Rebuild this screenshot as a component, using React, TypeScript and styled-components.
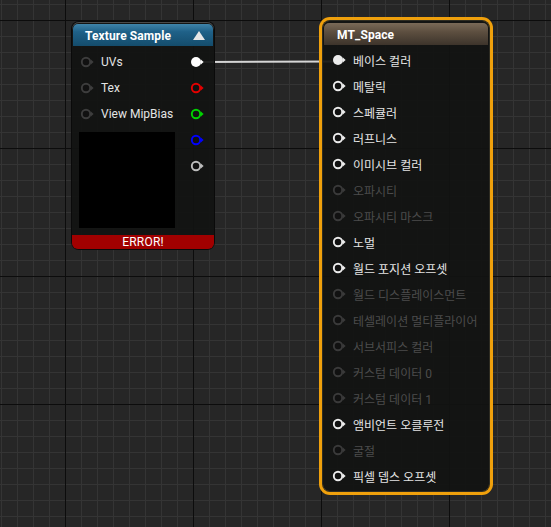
import React from 'react';
import styled, { createGlobalStyle } from 'styled-components';

const GlobalStyle = createGlobalStyle`
    html, body {
        margin: 0;
        padding: 0;
        background: #262626;
    }
    body {
        font-family: Roboto, "Noto Sans CJK KR", sans-serif;
    }
`;

const Canvas = styled.div`
    position: relative;
    width: 551px;
    height: 527px;
    overflow: hidden;
    background-color: #262626;
    background-image:
        linear-gradient(to right, #0c0c0c 1px, transparent 1px),
        linear-gradient(to bottom, #0c0c0c 1px, transparent 1px),
        linear-gradient(to right, #343434 1px, transparent 1px),
        linear-gradient(to bottom, #343434 1px, transparent 1px);
    background-size: 128px 100%, 100% 128px, 16px 100%, 100% 16px;
    background-position: 65px 0, 0 20px, 1px 0, 0 4px;
`;

const Wires = styled.svg`
    position: absolute;
    left: 0;
    top: 0;
    width: 551px;
    height: 527px;
    pointer-events: none;
`;

interface NodeBoxProps {
    $x: number;
    $y: number;
    $w: number;
    $selected?: boolean;
}

const NodeBox = styled.div<NodeBoxProps>`
    position: absolute;
    left: ${(p) => p.$x}px;
    top: ${(p) => p.$y}px;
    width: ${(p) => p.$w}px;
    box-sizing: border-box;
    display: flex;
    flex-direction: column;
    padding: 2px 1px 0;
    border-radius: 7px;
    background: rgba(18, 19, 18, 0.93);
    box-shadow: ${(p) => (p.$selected
        ? '0 0 0 1px #2e2c22, 0 0 0 4px #efa00c'
        : '0 0 0 1px #0a0a0a, inset 0 1px 0 #4a4a4a')};
`;

const Header = styled.div<{ $tone: 'blue' | 'brown' }>`
    height: 22px;
    box-sizing: border-box;
    display: flex;
    align-items: center;
    justify-content: space-between;
    padding: 1px 8px 0 ${(p) => (p.$tone === 'blue' ? 12 : 13)}px;
    border-radius: 5px 5px 0 0;
    background: ${(p) => (p.$tone === 'blue'
        ? 'linear-gradient(180deg, #3f84aa 0%, #1f6188 35%, #144c6c 100%)'
        : 'linear-gradient(180deg, #7a6a58 0%, #5d4f40 40%, #3d342b 100%)')};
    color: #fff;
    font-weight: bold;
    font-size: 12px;
    letter-spacing: 0.1px;
`;

const Collapse = styled.span`
    width: 0;
    height: 0;
    border-left: 6px solid transparent;
    border-right: 6px solid transparent;
    border-bottom: 9px solid #e6e6e6;
    margin-bottom: 1px;
`;

const Body = styled.div`
    display: flex;
    justify-content: space-between;
    padding-top: 3px;
`;

const Column = styled.div<{ $right?: boolean }>`
    display: flex;
    flex-direction: column;
    padding: ${(p) => (p.$right ? '0 9px 0 0' : '0')};
`;

const Row = styled.div<{ $pad?: number }>`
    height: 26px;
    display: flex;
    align-items: center;
    gap: 7px;
    padding-left: ${(p) => p.$pad ?? 7}px;
`;

const Label = styled.span<{ $dim?: boolean }>`
    font-size: 12px;
    color: ${(p) => (p.$dim ? '#4c4c4c' : '#e4e4e4')};
    white-space: nowrap;
`;

const Preview = styled.div`
    width: 96px;
    height: 96px;
    margin: 5px 0 0 6px;
    background: #000;
`;

const ErrorBar = styled.div`
    margin: 7px -1px 0;
    height: 14px;
    border-radius: 0 0 6px 6px;
    background: #a10000;
    color: #fff;
    font-size: 12px;
    line-height: 14px;
    text-align: center;
    letter-spacing: 0.2px;
`;

const PinSvg = styled.svg`
    flex: none;
    width: 14px;
    height: 12px;
`;

function Pin({ color, filled, fill = '#111' }: { color: string; filled?: boolean; fill?: string }): JSX.Element {
    return (
        <PinSvg viewBox='0 0 14 12'>
            <circle cx='6' cy='6' r={filled ? 5 : 4.2} fill={filled ? color : fill} stroke={color} strokeWidth={filled ? 0 : 1.9} />
            <polygon points='10.6,3.2 13.6,6 10.6,8.8' fill={color} />
        </PinSvg>
    );
}

const textureInputs = ['UVs', 'Tex', 'View MipBias'];
const textureOutputs = [
    { color: '#ffffff', filled: true },
    { color: '#e40000' },
    { color: '#00d400' },
    { color: '#0000ff' },
    { color: '#bdbdbd' },
];

const materialInputs: { label: string; active: boolean; linked?: boolean }[] = [
    { label: '베이스 컬러', active: true, linked: true },
    { label: '메탈릭', active: true },
    { label: '스페큘러', active: true },
    { label: '러프니스', active: true },
    { label: '이미시브 컬러', active: true },
    { label: '오파시티', active: false },
    { label: '오파시티 마스크', active: false },
    { label: '노멀', active: true },
    { label: '월드 포지션 오프셋', active: true },
    { label: '월드 디스플레이스먼트', active: false },
    { label: '테셀레이션 멀티플라이어', active: false },
    { label: '서브서피스 컬러', active: false },
    { label: '커스텀 데이터 0', active: false },
    { label: '커스텀 데이터 1', active: false },
    { label: '앰비언트 오클루전', active: true },
    { label: '굴절', active: false },
    { label: '픽셀 뎁스 오프셋', active: true },
];

function TextureSampleNode(): JSX.Element {
    return (
        <NodeBox $x={72} $y={22} $w={142}>
            <Header $tone='blue'>
                Texture Sample
                <Collapse />
            </Header>
            <Body>
                <Column>
                    {textureInputs.map((name) => (
                        <Row key={name}>
                            <Pin color='#3d3d3d' />
                            <Label>{name}</Label>
                        </Row>
                    ))}
                    <Preview />
                </Column>
                <Column $right>
                    {textureOutputs.map((pin) => (
                        <Row key={pin.color} $pad={0}>
                            <Pin color={pin.color} filled={pin.filled} />
                        </Row>
                    ))}
                </Column>
            </Body>
            <ErrorBar>ERROR!</ErrorBar>
        </NodeBox>
    );
}

function MaterialNode(): JSX.Element {
    return (
        <NodeBox $x={323} $y={21} $w={166} $selected>
            <Header $tone='brown'>MT_Space</Header>
            <Column style={{ paddingTop: 2, paddingBottom: 2 }}>
                {materialInputs.map((input) => (
                    <Row key={input.label} $pad={8}>
                        <Pin
                            color={input.active ? '#ececec' : '#3a3a3a'}
                            filled={input.linked}
                        />
                        <Label $dim={!input.active}>{input.label}</Label>
                    </Row>
                ))}
            </Column>
        </NodeBox>
    );
}

export default function App(): JSX.Element {
    return (
        <>
            <GlobalStyle />
            <Canvas>
                <Wires viewBox='0 0 551 527'>
                    <line x1='203' y1='62' x2='336' y2='61.5' stroke='#d6d6d6' strokeWidth='2' />
                </Wires>
                <TextureSampleNode />
                <MaterialNode />
            </Canvas>
        </>
    );
}
